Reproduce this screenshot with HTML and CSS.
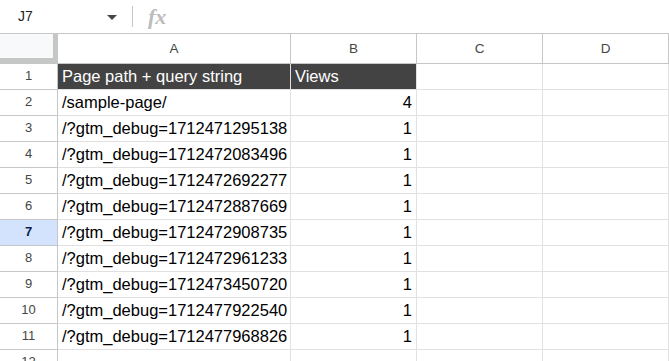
FILE: index.html
```html
<!DOCTYPE html>
<html>
<head>
  <meta charset="UTF-8">
  <title>Sheet</title>
  <link rel="stylesheet" href="styles.css">
</head>
<body>
  <!-- Name box + formula bar -->
  <div class="formula-bar">
    <div class="name-box">
      <span class="cell-ref">J7</span>
      <span class="caret"></span>
    </div>
    <div class="divider"></div>
    <span class="fx">fx</span>
  </div>

  <!-- Grid -->
  <div class="sheet">
    <div class="corner"></div>
    <div class="col-head">A</div>
    <div class="col-head">B</div>
    <div class="col-head">C</div>
    <div class="col-head">D</div>

    <div class="row-head">1</div>
    <div class="cell head">Page path + query string</div>
    <div class="cell head">Views</div>
    <div class="cell"></div>
    <div class="cell"></div>

    <div class="row-head">2</div>
    <div class="cell">/sample-page/</div>
    <div class="cell num">4</div>
    <div class="cell"></div>
    <div class="cell"></div>

    <div class="row-head">3</div>
    <div class="cell">/?gtm_debug=1712471295138</div>
    <div class="cell num">1</div>
    <div class="cell"></div>
    <div class="cell"></div>

    <div class="row-head">4</div>
    <div class="cell">/?gtm_debug=1712472083496</div>
    <div class="cell num">1</div>
    <div class="cell"></div>
    <div class="cell"></div>

    <div class="row-head">5</div>
    <div class="cell">/?gtm_debug=1712472692277</div>
    <div class="cell num">1</div>
    <div class="cell"></div>
    <div class="cell"></div>

    <div class="row-head">6</div>
    <div class="cell">/?gtm_debug=1712472887669</div>
    <div class="cell num">1</div>
    <div class="cell"></div>
    <div class="cell"></div>

    <div class="row-head selected">7</div>
    <div class="cell">/?gtm_debug=1712472908735</div>
    <div class="cell num">1</div>
    <div class="cell"></div>
    <div class="cell"></div>

    <div class="row-head">8</div>
    <div class="cell">/?gtm_debug=1712472961233</div>
    <div class="cell num">1</div>
    <div class="cell"></div>
    <div class="cell"></div>

    <div class="row-head">9</div>
    <div class="cell">/?gtm_debug=1712473450720</div>
    <div class="cell num">1</div>
    <div class="cell"></div>
    <div class="cell"></div>

    <div class="row-head">10</div>
    <div class="cell">/?gtm_debug=1712477922540</div>
    <div class="cell num">1</div>
    <div class="cell"></div>
    <div class="cell"></div>

    <div class="row-head">11</div>
    <div class="cell">/?gtm_debug=1712477968826</div>
    <div class="cell num">1</div>
    <div class="cell"></div>
    <div class="cell"></div>

    <div class="row-head">12</div>
    <div class="cell"></div>
    <div class="cell"></div>
    <div class="cell"></div>
    <div class="cell"></div>
  </div>
</body>
</html>
```

FILE: styles.css
```css
body {
  margin: 0;
  background: white;
  font-family: 'Liberation Sans', Arial, sans-serif;
  overflow: hidden;
}

.formula-bar {
  height: 33px;
  border-bottom: 1px solid #c7c7c7;
  display: flex;
  align-items: center;
}

.name-box {
  width: 132px;
  display: flex;
  align-items: center;
  justify-content: space-between;
  padding: 0 15px 0 18px;
  box-sizing: border-box;
}

.cell-ref {
  font-size: 14px;
  color: #1f1f1f;
  line-height: 33px;
}

.caret {
  width: 0;
  height: 0;
  border-left: 5px solid transparent;
  border-right: 5px solid transparent;
  border-top: 5px solid #444746;
  margin-top: 1px;
}

.divider {
  width: 1px;
  height: 21px;
  background: #c7c7c7;
}

.fx {
  margin-left: 15px;
  font-family: 'Liberation Serif', serif;
  font-style: italic;
  font-weight: bold;
  font-size: 22px;
  color: #bcbcbc;
}

.sheet {
  display: grid;
  grid-template-columns: 58px 233px 126px 126px 126px;
  grid-template-rows: 30px repeat(12, 26px);
}

.corner {
  background: #f8f9fa;
  border-right: 5px solid #c4c7c5;
  border-bottom: 6px solid #c4c7c5;
  box-sizing: border-box;
  height: 30px;
}

.col-head {
  border-right: 1px solid #c4c7c5;
  border-bottom: 1px solid #c4c7c5;
  font-size: 13.5px;
  color: #444746;
  text-align: center;
  line-height: 29px;
}

.row-head {
  border-right: 1px solid #c4c7c5;
  border-bottom: 1px solid #c4c7c5;
  font-size: 13px;
  color: #444746;
  text-align: center;
  line-height: 24px;
}

.row-head.selected {
  background: #d3e3fd;
  color: #0b1f4b;
  font-weight: bold;
}

.cell {
  border-right: 1px solid #e1e1e1;
  border-bottom: 1px solid #e1e1e1;
  font-size: 16.5px;
  color: #000;
  line-height: 25px;
  padding: 0 4px;
  white-space: nowrap;
  overflow: hidden;
}

.cell.head {
  background: #434343;
  color: white;
}

.cell.num {
  text-align: right;
}
```
